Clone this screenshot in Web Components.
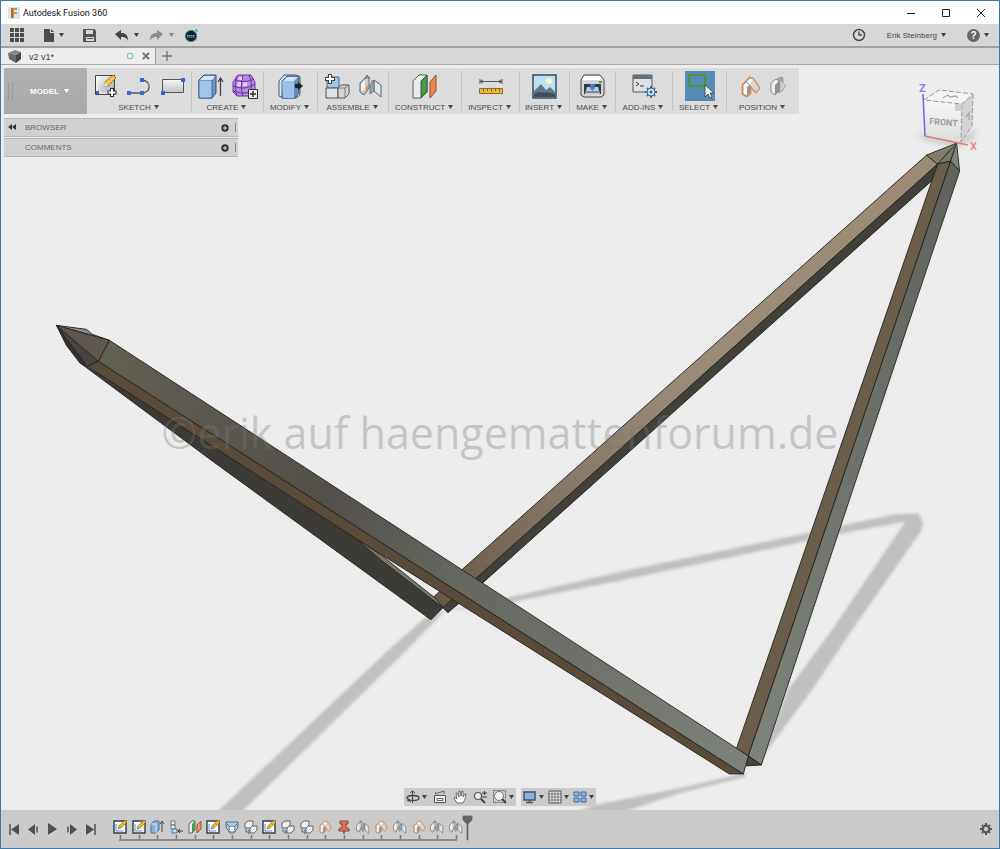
<!DOCTYPE html>
<html lang="en">
<head>
<meta charset="utf-8">
<meta name="viewport" content="width=device-width">
<title>Autodesk Fusion 360</title>
<style>
html, body { margin: 0; height: 100%; }
body { font-family: "Liberation Sans", Arial, sans-serif; font-size: 8px; color: #4c4c4c; }
</style>
</head>
<body>
<fusion-app></fusion-app>
<script>
const joint = `<path d="M1 9l5-5 4-1v11l-5 7-4-3z" fill="#c3cbd0" stroke="#5d676e"/><path d="M2 10l4-4v9l-4 3z" fill="#eef1f2"/><path d="M6 5l2-4 3 4" fill="none" stroke="#5d676e"/><path d="M8 18v-6M13 12V6" fill="none" stroke="#e58338" stroke-width="1.500"/><path d="M15 6l7 5v12l-7-6z" fill="#e0e5e8" stroke="#5d676e"/><path d="M11 11l4-5v11l-4 3z" fill="#98a2a9" stroke="#5d676e" stroke-width=".7"/>`;
const elbow = `<path d="M2 9l7-7 3 1 6 9-3 4-6-7v8l-3 3-4-2z" fill="#eb8b45" stroke="#eb8b45" stroke-width="2.800" stroke-linejoin="round"/><path d="M5 6l4-4 3 1 6 9-3 4-7-8z" fill="#fafafa" stroke="#888" stroke-width=".6"/><path d="M9 7l3-4 6 9-3 4z" fill="#d6d6d6"/><path d="M2 9l3-3 4 3v8l-3 3-4-2z" fill="#f4f4f4" stroke="#777" stroke-width=".6"/><path d="M6 11l3-2v8l-3 3z" fill="#999"/>`;
const ICONS = {
 fusion: [12,12,`<path d="M0 0h12v12H0z" fill="#c9ebf6"/><path d="M3 1h6v2H6v2h3v2H6v4H3z" fill="#e58a2b"/><path d="M3 1h2v10H3z" fill="#b86424"/>`],
 min: [10,10,`<path d="M1 5.500h8" stroke="#222"/>`],
 max: [10,10,`<path d="M1.500 1.500h7v7h-7z" fill="none" stroke="#222"/>`],
 close: [10,10,`<path d="M1 1l8 8M9 1l-8 8" stroke="#222"/>`],
 grid: [14,14,[0,5,10].map(y=>[0,5,10].map(x=>`<path d="M${x} ${y}h4v4h-4z" fill="#4d4d4d"/>`).join('')).join('')],
 file: [12,13,`<path d="M1 0h6v4h4v9H1z" fill="#4d4d4d"/><path d="M8 0l3 3H8z" fill="#4d4d4d"/>`],
 caret: [5,4,`<path d="M0 0h5L2.500 4z" fill="currentColor"/>`],
 save: [13,13,`<path d="M0 0h12l1 2v11H0z" fill="#555"/><path d="M3 1h7v4H3z" fill="#d6d6d6"/><path d="M3 8h8v4H3z" fill="#d6d6d6"/><path d="M4 9.500h6" stroke="#555"/>`],
 undo: [14,12,`<path d="M0 5l6-4v3c5 0 7 2 7 8-1-3-3-4-7-4v3z" fill="currentColor"/>`],
 redo: [14,12,`<path d="M13 5L7 1v3C2 4 0 6 0 12c1-3 3-4 7-4v3z" fill="#8b8b8b"/>`],
 globe: [13,13,`<circle cx="6" cy="7" r="5.600" fill="#10202b" stroke="#2f8299"/><path d="M2 6.500h8M2 8h8" stroke="#8fb3bf" stroke-dasharray="1.500 .5"/><path d="M10 1h2v2M11 11h1" stroke="#168ccc" fill="none"/>`],
 clock: [14,14,`<circle cx="7" cy="7" r="5.500" fill="none" stroke="#4a4a4a" stroke-width="1.500"/><path d="M7 3.500V7h3" stroke="#4a4a4a" fill="none" stroke-width="1.400"/>`],
 cube: [13,13,`<path d="M0 3l7-3 6 2-5 3z" fill="#888"/><path d="M0 3l8 2v8L1 9z" fill="#6a6a6a"/><path d="M8 5l5-3v7l-5 4z" fill="#454545"/>`],
 ring: [8,8,`<circle cx="4" cy="4" r="2.900" fill="none" stroke="#62c3a2"/>`],
 cross: [8,8,`<path d="M1 1l6 6M7 1L1 7" stroke="#777" stroke-width="2"/>`],
 plus: [10,10,`<path d="M5 0v10M0 5h10" stroke="#777" stroke-width="1.400"/>`],
 sketch: [24,24,`<defs><linearGradient id="a" x2="1" y2="1"><stop stop-color="#fff"/><stop offset="1" stop-color="#9aa4ad"/></linearGradient></defs><path d="M1.500 1.500h19v19h-19z" fill="url(#a)" stroke="#444"/><path d="M3 3v16h16" stroke="#fff" fill="none"/><path d="M10 12l1-4 8-7 3 3-8 8z" fill="#f2c548" stroke="#76561e" stroke-width=".7"/><path d="M10 12l1-4 3 4z" fill="#f7e6c1"/><path d="M18 14v9M13.500 18.500h9" stroke="#333" stroke-width="4"/><path d="M18 15v7M14.500 18.500h7" stroke="#fff" stroke-width="2"/><path d="M2 17h3v3H2z" fill="#2c64c8"/>`],
 arc: [25,20,`<path d="M2 17h13c9 0 10-12 0-13" fill="none" stroke="#555" stroke-width="1.300"/><path d="M0 15h4v4H0zM13 15h4v4h-4zM13 2h4v4h-4z" fill="#346bd3"/>`],
 rect: [24,18,`<defs><linearGradient id="a" x2="0" y2="1"><stop stop-color="#f7f7f7"/><stop offset="1" stop-color="#bfc3c8"/></linearGradient></defs><path d="M1.500 2.500h21v13h-21z" fill="url(#a)" stroke="#555"/><path d="M0 14h4v4H0zM20 1h4v4h-4z" fill="#346bd3"/>`],
 extrude: [25,25,`<path d="M1 6l5-5h12v18l-4 5H1z" fill="#6d98cb" stroke="#31506f"/><path d="M1 6h13v18H1z" fill="#9fc6ea" stroke="#31506f" stroke-width=".7"/><path d="M2 6l4-4h11l-3 4z" fill="#d3e8fa"/><path d="M22.500 22V5M20 8l2.500-4L25 8" stroke="#444" fill="none" stroke-width="1.300"/>`],
 form: [26,26,`<path d="M1 9l5-7h13l4 7v10l-5 4H5l-4-4z" fill="#b78ce8" stroke="#6c35a0"/><path d="M1 13c8 3 14 3 22-2M1 18c8 3 15 3 22-2M5 3c-2 6-2 14 0 20M11 2c-2 8-2 14 0 21M17 2c3 6 3 14 0 21M3 7c7 2 13 2 19-1" stroke="#643090" fill="none"/><path d="M7 4h3v3H6zM12 9h3v4h-4zM6 9h3v4H5z" fill="#e7cdfb"/><path d="M16.500 16.500h9v9h-9z" fill="#eee" stroke="#333"/><path d="M18 21h6M21 18v6" stroke="#333" stroke-width="1.500"/>`],
 modify: [25,25,`<path d="M1 7l5-6h12l4 2v18l-4 3H5l-4-2z" fill="#e1e8ee" stroke="#425970"/><path d="M4 7l5-5h12v17l-4 5H4z" fill="#638dbb" stroke="#425970"/><path d="M4 7h12v17H5z" fill="#9ac0e5"/><path d="M5 7l4-4h11l-4 4z" fill="#cfe3f5"/><path d="M17 10h3V8l5 4-5 4v-2h-3z" fill="#222"/>`],
 component: [25,25,`<path d="M2 3h12v11H2z" fill="#9dc4e9" stroke="#426b96"/><path d="M1 14h12v10H1z" fill="#dfe2e5" stroke="#555"/><path d="M13 14l3-3h8v9l-4 4h-7z" fill="#d2d6da" stroke="#555"/><path d="M13 14h7v10M20 14l4-3" fill="none" stroke="#777"/><path d="M5 0v10M0 5h10" stroke="#444" stroke-width="4"/><path d="M5 1v8M1 5h8" stroke="#fff" stroke-width="2"/>`],
 joint: [23,24,joint],
 construct: [26,25,`<path d="M1 7l6-6h8v17l-6 6H1z" fill="#e8ecee" stroke="#52605a"/><path d="M9 7l6-6v17l-6 6z" fill="#4d9648" stroke="#315f30"/><path d="M18 8l6-7v16l-6 7z" fill="#e88852" stroke="#984c27"/>`],
 inspect: [24,18,`<path d="M1 4.500h22M1 2v5M23 2v5M4 3L1 4.500 4 6M20 3l3 1.500L20 6" stroke="#555" fill="none"/><path d="M.5 11.500h23v5H.5z" fill="#efbb39" stroke="#8b6824"/><path d="M4.500 12v3M8.500 12v2M12.500 12v3M16.500 12v2M20.500 12v3" stroke="#8b6824"/>`],
 picture: [25,25,`<path d="M1 1h23v23H1z" fill="#bcdff2" stroke="#394b59" stroke-width="1.500"/><circle cx="17" cy="7" r="3" fill="#fff3bf"/><path d="M2 17l7-7 5 6 4-3 5 5v5H2z" fill="#687684"/><path d="M2 20c5-4 8 0 12-2l9 2v3H2z" fill="#3e4d5d"/>`],
 printer: [25,24,`<path d="M4 1h16l4 5v15l-3 2H4l-3-2V6z" fill="#d3d7da" stroke="#444"/><path d="M4 2h16l3 4H2z" fill="#fff"/><path d="M4 10h17v10H4z" fill="#343b42"/><path d="M7 13h11l2 7H5z" fill="#c5ccd3"/><path d="M10 10h5v4l-2.500 3-2.500-3z" fill="#3d7edb"/><path d="M6 18h13" stroke="#444"/><path d="M19 8h3" stroke="#42a72c" stroke-width="2"/>`],
 addins: [25,24,`<path d="M1 1h19v17H1z" fill="#dce2e8" stroke="#555"/><path d="M1 1h19v4H1z" fill="#66717d"/><path d="M4 8l3 2-3 2M8 12h4" stroke="#444" fill="none"/><path d="M19 12v12M13 18h12M15 14l8 8M23 14l-8 8" stroke="#3d658f" stroke-width="2"/><circle cx="19" cy="18" r="4" fill="#cce2f6" stroke="#3d658f"/><circle cx="19" cy="18" r="1.500" fill="#3d658f"/>`],
 select: [30,30,`<path d="M0 0h30v30H0z" fill="#568bb5"/><path d="M4 4h16v11H4z" fill="none" stroke="#4c961e" stroke-width="1.700"/><path d="M20 14v12l3-3 2 4 2-1-2-4h4z" fill="#f8f8f8" stroke="#333" stroke-width=".8"/>`],
 position: [20,21,elbow],
 revert: [16,20,`<path d="M7 3l4-2 2 1v12l-4 3z" fill="#aaa" stroke="#888" stroke-width=".7"/><path d="M10 4l6 6-6 6z" fill="#d0d0d0" stroke="#aaa"/><path d="M1 7l5-4 3 2v10l-4 4-4-3z" fill="#eee" stroke="#777" stroke-width=".8"/><path d="M5 9l4-4v10l-4 4z" fill="#8f8f8f"/>`],
 rewind: [8,6,`<path d="M0 3l4-3v6zM4 3l4-3v6z" fill="#333"/>`],
 add: [8,8,`<circle cx="4" cy="4" r="3.700" fill="#333"/><path d="M4 2v4M2 4h4" stroke="#ddd"/>`],
 first: [10,11,`<path d="M1 0v11" stroke="#4b5156" stroke-width="1.500"/><path d="M10 0v11L2 5.500z" fill="#4b5156"/>`],
 back: [11,11,`<path d="M7 0v11L0 5.500z" fill="#4b5156"/><path d="M9 2.500v6" stroke="#4b5156" stroke-width="1.500"/>`],
 play: [9,12,`<path d="M0 0l9 6-9 6z" fill="#4b5156"/>`],
 next: [11,11,`<path d="M4 0v11l7-5.500z" fill="#4b5156"/><path d="M2 2.500v6" stroke="#4b5156" stroke-width="1.500"/>`],
 last: [10,11,`<path d="M9 0v11" stroke="#4b5156" stroke-width="1.500"/><path d="M0 0v11l8-5.500z" fill="#4b5156"/>`],
 tsketch: [14,14,`<path d="M1 1h12v12H1z" fill="#f8fafc" stroke="#303b45" stroke-width="1.400"/><path d="M3 4v7h7" fill="none" stroke="#5392cf"/><path d="M5 9l1-3 6-6 2 2-6 6z" fill="#efb52f" stroke="#80611e" stroke-width=".6"/>`],
 textrude: [14,14,`<path d="M1 4l3-3h5v9l-3 3H1z" fill="#86aedb" stroke="#537392"/><path d="M1 4h5v9" fill="none" stroke="#d2e6fa"/><path d="M12 12V2M10 4l2-3 2 3" stroke="#444" fill="none"/>`],
 tpattern: [14,14,`<path d="M2 1h4v4H2zM2 5h4v4H2z" fill="#eee" stroke="#777"/><path d="M3 9h5v4H3z" fill="#bcdffa" stroke="#3276b5"/><path d="M14 11H9M11 9l-2 2 2 2" stroke="#333" fill="none"/>`],
 tconstruct: [14,14,`<path d="M1 4l3-3h3v9l-3 3H1z" fill="#eee" stroke="#666"/><path d="M4 4l3-3v9l-3 3z" fill="#4f9851"/><path d="M9 5l4-4v8l-4 4z" fill="#ed9863" stroke="#995129"/>`],
 tloft: [14,14,`<path d="M1 2h12v5l-4 6H5L1 7z" fill="#b0c9e3" stroke="#526c85"/><path d="M1 3l4 4h4l4-4M5 7v5M9 7v5" fill="none" stroke="#62809d"/><path d="M5 7h4v4H5z" fill="#f6f6f6"/>`],
 tcopy: [14,14,`<path d="M1 3l3-2h5v4L6 8H1z" fill="#eee" stroke="#666"/><path d="M6 8l2-2h5v4l-3 3H6z" fill="#eee" stroke="#666"/><path d="M2 9v3h3M4 10l2 2-2 2" stroke="#3276b5" fill="none"/>`],
 tpos: [14,14,`<g transform="translate(1 0) scale(.65)">${elbow}</g>`],
 tpin: [14,14,`<path d="M3 1h8v3H9v3l3 2v2H2V9l3-2V4H3z" fill="#db715c" stroke="#94402f"/><path d="M7 11v3" stroke="#555" stroke-width="1.500"/>`],
 tjoint: [14,14,`<g transform="scale(.58)">${joint}</g>`],
 marker: [10,24,`<path d="M0 0h9v4L5 8v16H4V8L0 4z" fill="#666" stroke="#666" stroke-width=".8"/>`],
 gear: [12,12,`<circle cx="6" cy="6" r="3.300" fill="none" stroke="#555" stroke-width="2.200"/><path d="M6 0v2M6 10v2M0 6h2M10 6h2M2 2l1 1M9 9l1 1M2 10l1-1M9 3l1-1" stroke="#555" stroke-width="2"/>`],
 orbit: [14,14,`<path d="M6.500 1v12M4 3l2.500-2L9 3" stroke="#444" fill="none"/><ellipse cx="7" cy="8" rx="6" ry="2.500" fill="none" stroke="#444" stroke-width="1.300"/><path d="M3 8l2 4-4-1z" fill="#444"/>`],
 look: [14,14,`<path d="M1.500 5.500h11v7h-11z" fill="#eee" stroke="#555"/><path d="M4 8.500h6v2H4z" fill="none" stroke="#666"/><path d="M2 4l9-3v3M2 2l2 2" stroke="#666" fill="none"/>`],
 hand: [14,14,`<path d="M4 13L1 8l1-1 2 2-1-6h1l2 4V1h1l1 5 1-5h1v6l2-3h1l-1 5-2 4z" fill="#fff" stroke="#555" stroke-width=".8"/>`],
 zoom: [14,14,`<circle cx="5" cy="6" r="3.500" fill="#e6f3f9" stroke="#555" stroke-width="1.200"/><path d="M8 9l4 4" stroke="#444" stroke-width="2"/><path d="M11.500 1v4M9 3h5M9 7h5" stroke="#444"/>`],
 fit: [14,14,`<path d="M.5.5h12v12H.5z" fill="none" stroke="#666" stroke-dasharray="2 1"/><circle cx="6" cy="6" r="4.500" fill="#eaf4f6" stroke="#777"/><path d="M9 9l4 4" stroke="#444" stroke-width="2"/>`],
 monitor: [14,14,`<path d="M1 2h11v8H1z" fill="#8cb3e0" stroke="#40566b" stroke-width="1.500"/><path d="M6.500 10v2M3 12.500h7" stroke="#555" stroke-width="1.500"/>`],
 mesh: [14,14,`<path d="M1 1h12v12H1z" fill="#eee" stroke="#555"/><path d="M4 1v12M7 1v12M10 1v12M1 4h12M1 7h12M1 10h12" stroke="#777"/>`],
 views: [14,14,`<path d="M1 2h5v4H1zM8 2h5v4H8zM1 8h5v4H1zM8 8h5v4H8z" fill="#8cb6e6" stroke="#3f6a99"/>`]
};
const define = (tag, css, html) => {
  const template = document.createElement('template');
  customElements.define(tag, class extends HTMLElement {
    constructor() { super(); this.attachShadow({ mode: 'open' }); }
    connectedCallback() {
      template.innerHTML = `<style>${css}</style>` + (typeof html === 'function' ? html(this) : html);
      this.shadowRoot.replaceChildren(template.content.cloneNode(true));
    }
  });
};
const button = `button{all:unset;box-sizing:border-box;cursor:pointer;display:inline-flex;align-items:center;justify-content:center}`;

define('fx-icon', `:host{display:inline-flex;flex:none}svg{display:block;overflow:visible}`, el => {
  const [w, h, body] = ICONS[el.getAttribute('name')];
  return `<svg width="${w}" height="${h}" viewBox="0 0 ${w} ${h}" aria-hidden="true">${body}</svg>`;
});

define('title-bar', `:host{display:flex;align-items:center;height:23px;padding:0 13px 0 7px;background:#fff;color:#111}
${button} h1{margin:0;font:9px/16px Roboto,sans-serif;flex:1;padding-left:3px}nav{display:flex;gap:25px}`,
`<fx-icon name="fusion"></fx-icon><h1>Autodesk Fusion 360</h1><nav>
<button aria-label="Minimize"><fx-icon name="min"></fx-icon></button><button aria-label="Maximize"><fx-icon name="max"></fx-icon></button><button aria-label="Close"><fx-icon name="close"></fx-icon></button></nav>`);

define('quick-bar', `:host{display:flex;align-items:center;height:22px;padding:0 10px 0 9px;background:#d7d7d7;border-bottom:2px solid #a0a0a0;color:#444}
${button} button{gap:4px}.left{display:flex;align-items:center;gap:19px;flex:1}.history{display:flex;gap:11px}.history button{gap:5px}.right{display:flex;align-items:center;gap:21px}.faded{color:#888}.user{font-size:8px}`,
`<div class="left"><button aria-label="Data panel"><fx-icon name="grid"></fx-icon></button><button aria-label="File"><fx-icon name="file"></fx-icon><fx-icon name="caret"></fx-icon></button><button aria-label="Save"><fx-icon name="save"></fx-icon></button><div class="history"><button aria-label="Undo"><fx-icon name="undo"></fx-icon><fx-icon name="caret"></fx-icon></button><button class="faded" aria-label="Redo"><fx-icon name="redo"></fx-icon><fx-icon name="caret"></fx-icon></button><button aria-label="Extensions"><fx-icon name="globe"></fx-icon></button></div></div>
<div class="right"><button aria-label="Job status"><fx-icon name="clock"></fx-icon></button><button class="user">Erik Steinberg<fx-icon name="caret"></fx-icon></button><help-button></help-button></div>`);

define('help-button', `:host{display:flex}${button} button{gap:4px}i{width:13px;height:13px;border-radius:50%;background:#666;color:#fff;font:bold 10px/13px "Liberation Sans",sans-serif;text-align:center}`,
`<button><i>?</i><fx-icon name="caret"></fx-icon></button>`);

define('tab-bar', `:host{display:flex;height:16px;background:#d7d7d7;border-bottom:1px solid #aaa}
${button} .tab{display:flex;align-items:center;width:155px;box-sizing:border-box;padding:0 5px 0 7px;background:#ececec;border-right:1px solid #999;font-size:9px;gap:8px}.tab a{flex:1;color:#444;text-decoration:none;padding-top:1px}.new{padding:0 6px}`,
`<div class="tab"><fx-icon name="cube"></fx-icon><a href="#design">v2 v1*</a><fx-icon name="ring"></fx-icon><button aria-label="Close tab"><fx-icon name="cross"></fx-icon></button></div><button class="new" aria-label="New tab"><fx-icon name="plus"></fx-icon></button>`);

define('tool-group', `:host{display:flex;flex-direction:column;align-items:center;border-left:1px solid #c3c3c3;height:40px;margin:3px 0}:host([first]){border-color:transparent}
${button} .icons{display:flex;flex:none;align-items:center;justify-content:center;gap:9px;height:30px}button{flex:none;gap:3px;height:12px;font-size:8px;color:#4a4a4a;white-space:nowrap;padding-right:2px}`,
el => `<div class="icons"><slot></slot></div><button>${el.getAttribute('label')}<fx-icon name="caret"></fx-icon></button>`);

const groups = [['SKETCH','sketch arc rect'],['CREATE','extrude form'],['MODIFY','modify'],['ASSEMBLE','component joint'],['CONSTRUCT','construct'],['INSPECT','inspect'],['INSERT','picture'],['MAKE','printer'],['ADD-INS','addins'],['SELECT','select'],['POSITION','position revert']];
define('main-toolbar', `:host{display:grid;grid-template-columns:83px 104px 72px 54px 71px 73px 58px 50px 46px 57px 54px 73px;height:46px;width:max-content;background:#dcdcdc}
${button} .model{background:linear-gradient(#b0b0b0,#a9a9a9);color:#fff;font-weight:bold;font-size:8px;gap:5px;position:relative;padding-left:8px}.model::before{content:"";position:absolute;left:4px;top:14px;width:3px;height:18px;border:solid #999;border-width:0 1px}`,
`<button class="model">MODEL<fx-icon name="caret"></fx-icon></button>` + groups.map(([l, i], n) => `<tool-group label="${l}"${n ? '' : ' first'}>${i.split(' ').map(x => `<fx-icon name="${x}"></fx-icon>`).join('')}</tool-group>`).join(''));

define('side-panel', `:host{display:flex;align-items:center;box-sizing:border-box;width:234px;height:19px;padding:0 2px 0 4px;background:#d1d1d1;border:1px solid #b6b6b6;border-width:1px 0;color:#666}
${button} .lead{width:8px;margin-right:9px}span{flex:1;font-size:8px}.grip{width:1px;height:9px;border-right:1px solid #888;margin-left:5px}`,
el => `<div class="lead">${el.hasAttribute('open') ? '<button aria-label="Collapse"><fx-icon name="rewind"></fx-icon></button>' : ''}</div><span><slot></slot></span><button aria-label="Expand"><fx-icon name="add"></fx-icon></button><i class="grip"></i>`);

define('view-cube', `:host{display:block}svg{display:block;overflow:visible}text{font-family:Roboto,sans-serif}`,
`<svg width="64" height="72" viewBox="916 80 64 72"><defs><filter id="s" x="-50%" y="-50%" width="200%" height="200%"><feGaussianBlur stdDeviation="3"/></filter><linearGradient id="f" x2="0" y2="1"><stop stop-color="#f7f7f7"/><stop offset="1" stop-color="#dcdcdc"/></linearGradient></defs>
<path d="M920 134l40 8 18-14-6 10-14 8-36-8z" fill="#8a8a8a" opacity=".6" filter="url(#s)"/>
<path d="M924 100l15-10 34 4-11 10z" fill="#f4f4f4"/><path d="M962 104l11-10-1 32-11 16z" fill="#d4d4d4"/><path d="M924 100l38 4-1 38-36-6z" fill="url(#f)"/>
<path d="M924 100l15-10 34 4-11 10zM973 94l-1 32-11 16 1-38" fill="none" stroke="#999" stroke-dasharray="5 2"/><path d="M955 104h7v7h-7z" fill="#c9cfd4"/>
<path d="M943 98l5-3 2 2 6-1 2 2M966 117l3-4v7" fill="none" stroke="#aaa" stroke-width="1.300"/>
<text x="929" y="124" font-size="9" font-weight="bold" fill="#9b9fa3" transform="rotate(5 929 124)">FRONT</text>
<path d="M923 94l2 42" stroke="#6666ee" stroke-width="1.500"/><path d="M925 136l43 9" stroke="#e57878" stroke-width="1.500"/>
<text x="919" y="92" font-size="11" font-weight="bold" fill="#8585ef">Z</text><text x="970" y="150" font-size="11" font-weight="bold" fill="#f28b8b">X</text></svg>`);

define('model-scene', `:host{display:block;overflow:hidden}svg{display:block;width:100%;height:100%}`,
`<svg viewBox="1 65 998 744" preserveAspectRatio="xMidYMin slice" role="img" aria-label="Hammock stand model"><defs>
<filter id="b" x="-5%" y="-5%" width="110%" height="110%"><feGaussianBlur stdDeviation="1.500"/></filter>
<linearGradient id="tan" gradientUnits="userSpaceOnUse" x1="930" y1="160" x2="440" y2="600"><stop stop-color="#9c8c73"/><stop offset=".5" stop-color="#998b76"/><stop offset=".75" stop-color="#857866"/><stop offset="1" stop-color="#6a5a45"/></linearGradient>
<linearGradient id="main" gradientUnits="userSpaceOnUse" x1="100" y1="345" x2="748" y2="765"><stop stop-color="#625f54"/><stop offset=".35" stop-color="#53504a"/><stop offset=".55" stop-color="#64665f"/><stop offset="1" stop-color="#7d827b"/></linearGradient>
<linearGradient id="leg" gradientUnits="userSpaceOnUse" x1="955" y1="165" x2="755" y2="760"><stop stop-color="#5f625c"/><stop offset="1" stop-color="#7e837c"/></linearGradient></defs>
<g fill="#c0c0c0" filter="url(#b)"><path d="M210 818h25L406 650l40-41-22 9-36 32z"/><path d="M445 611l63-14 112-26 160-33 113-24 25-1 5 10-3 8-69 99-40 60-49 66 25-66 44-60 74-109-65 12-60 13-160 34-112 22z"/><path d="M745 772l-65 15-85 17-35 14h42l78-26 65-16z"/></g>
<g stroke="#24221e" stroke-linejoin="round" stroke-width=".9">
<path d="M926 155l11 9-460 413-34 30-10-10 29-28z" fill="url(#tan)"/>
<path d="M937 164l-4 15-450 403-35 30-5-5 34-30z" fill="#41403a"/>
<path d="M926 155l30-12-19 21z" fill="#817d6b"/><path d="M937 164l19-21-6 18z" fill="#77796c"/><path d="M950 161l6-18 3 28z" fill="#80857e"/>
<path d="M937 164l13-3-112 329-90 265-12-7 89-258z" fill="#6a5d49"/><path d="M950 161l9 10-107 319-91 274-13-9 90-265z" fill="url(#leg)"/><path d="M748 755l13 9-15 1z" fill="#454541"/>
<path d="M80 362L330 515L355 537L382 557L443 607L431 619L212 460z" fill="#3d3b36"/><path d="M355 537L382 555L436 598L443 607L382 560z" fill="#77776d"/>
<path d="M57 325l30 4 6 5 17 6-53-15z" fill="#8a8d8a"/><path d="M57 325l10 20 13 17 8 4z" fill="#33312e"/><path d="M57 325l42 36-11 5z" fill="#464541"/><path d="M57 325l53 15-11 21z" fill="#5d574e"/>
<path d="M99 361l281 180 363 232h-14L380 553 88 366z" fill="#5b4c3a"/><path d="M110 340l352 229 286 186-5 18-363-232L99 361z" fill="url(#main)"/>
</g></svg>`);

define('nav-bar', `:host{display:flex;gap:5px}${button} div{display:flex;align-items:center;height:18px;box-sizing:border-box;padding:0 2px;background:#cacaca;color:#444}.a{gap:6px}.b{gap:4px}button{gap:2px}`,
`<div class="a"><button aria-label="Orbit"><fx-icon name="orbit"></fx-icon><fx-icon name="caret"></fx-icon></button><button aria-label="Look at"><fx-icon name="look"></fx-icon></button><button aria-label="Pan"><fx-icon name="hand"></fx-icon></button><button aria-label="Zoom"><fx-icon name="zoom"></fx-icon></button><button aria-label="Fit"><fx-icon name="fit"></fx-icon><fx-icon name="caret"></fx-icon></button></div>
<div class="b"><button aria-label="Display"><fx-icon name="monitor"></fx-icon><fx-icon name="caret"></fx-icon></button><button aria-label="Grid"><fx-icon name="mesh"></fx-icon><fx-icon name="caret"></fx-icon></button><button aria-label="Viewports"><fx-icon name="views"></fx-icon><fx-icon name="caret"></fx-icon></button></div>`);

const steps = 'tsketch tsketch textrude tpattern tconstruct tsketch tloft tcopy tsketch tcopy tcopy tpos tpin tjoint tpos tjoint tpos tjoint tjoint'.split(' ');
const ticks = steps.map((_, n) => `M${Math.round(n * 56 / 3) + 7.5} 0v4`).join('');
define('time-line', `:host{display:flex;align-items:center;height:38px;box-sizing:border-box;padding:0 7px 0 8px;background:#cbcbcb}
${button} .controls{display:flex;align-items:center;gap:9px}.track{margin-left:17px;width:350px;padding-top:3px}.steps{display:flex;justify-content:space-between}.track svg{display:block;margin-top:1px}.head{flex:1}`,
`<div class="controls">${[['first','First'],['back','Previous'],['play','Play'],['next','Next'],['last','Last']].map(([i, l]) => `<button aria-label="${l}"><fx-icon name="${i}"></fx-icon></button>`).join('')}</div>
<div class="track"><div class="steps">${steps.map(s => `<fx-icon name="${s}"></fx-icon>`).join('')}</div><svg width="350" height="6" viewBox="0 0 350 6"><path d="${ticks}M6 5h338" fill="none" stroke="#777" stroke-width="1.500"/></svg></div>
<div class="head"><fx-icon name="marker"></fx-icon></div><button aria-label="Settings"><fx-icon name="gear"></fx-icon></button>`);

define('fusion-app', `:host{display:flex;flex-direction:column;min-height:100vh;box-sizing:border-box;border:1px solid #3878ae}
main{position:relative;flex:1;background:#ececec;display:flex;flex-direction:column;align-items:flex-start;padding:3px}
main>*{position:relative}main>.scene{position:absolute;inset:0}main>.cube{position:absolute;right:19px;top:15px}.panels{display:flex;flex-direction:column;gap:1px;margin-top:4px}
main>.mark{position:absolute;left:0;right:0;top:340px;margin:0;text-align:center;font:43px/56px "Open Sans",sans-serif;color:rgba(120,120,120,.34);white-space:nowrap}
.nav{margin:auto auto 1px;align-self:center}footer{display:block}`,
`<title-bar></title-bar><quick-bar></quick-bar><tab-bar></tab-bar>
<main><model-scene class="scene"></model-scene><p class="mark">©erik auf haengemattenforum.de</p><view-cube class="cube"></view-cube>
<main-toolbar></main-toolbar><div class="panels"><side-panel open>BROWSER</side-panel><side-panel>COMMENTS</side-panel></div><nav-bar class="nav"></nav-bar></main>
<footer><time-line></time-line></footer>`);
</script>
</body>
</html>
